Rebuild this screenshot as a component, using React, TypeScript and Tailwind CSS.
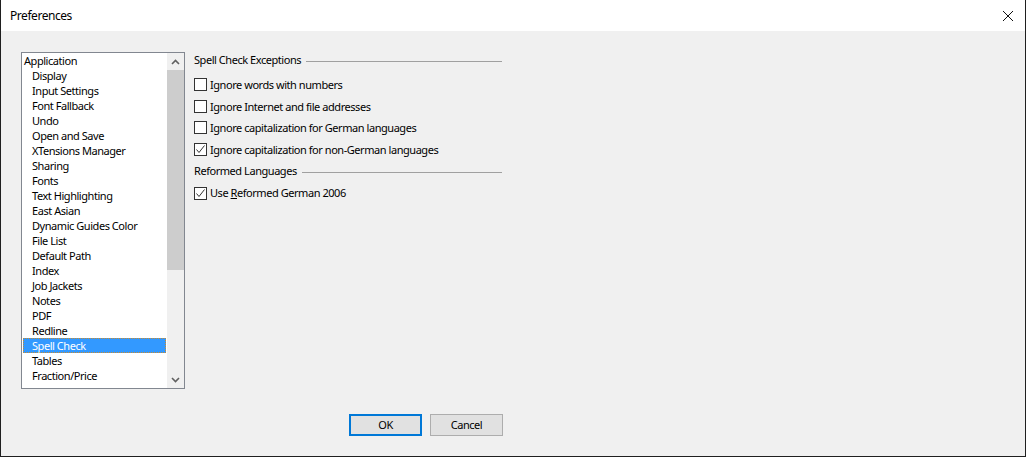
import React from "react";

const items = [
  "Display",
  "Input Settings",
  "Font Fallback",
  "Undo",
  "Open and Save",
  "XTensions Manager",
  "Sharing",
  "Fonts",
  "Text Highlighting",
  "East Asian",
  "Dynamic Guides Color",
  "File List",
  "Default Path",
  "Index",
  "Job Jackets",
  "Notes",
  "PDF",
  "Redline",
  "Spell Check",
  "Tables",
  "Fraction/Price",
];

function Checkbox({ checked }: { checked?: boolean }) {
  return (
    <span className="flex h-[13px] w-[13px] shrink-0 items-center justify-center border border-[#333333] bg-white">
      {checked && (
        <svg width="11" height="11" viewBox="0 0 11 11">
          <path d="M1.5 5.5 L4 8.5 L9.5 1.5" fill="none" stroke="#333333" strokeWidth="1" />
        </svg>
      )}
    </span>
  );
}

function CheckRow({ label, checked }: { label: React.ReactNode; checked?: boolean }) {
  return (
    <div className="flex h-[21.5px] items-center gap-[3px]">
      <Checkbox checked={checked} />
      <span className="pt-px">{label}</span>
    </div>
  );
}

function GroupHeading({ title }: { title: string }) {
  return (
    <div className="flex h-[22px] items-center">
      <span className="pt-px">{title}</span>
      <span className="ml-[5px] mt-[2px] h-px flex-1 bg-[#a0a0a0]" />
    </div>
  );
}

function Chevron({ up }: { up?: boolean }) {
  return (
    <svg width="9" height="6" viewBox="0 0 9 6">
      <path
        d={up ? "M1 5 L4.5 1.5 L8 5" : "M1 1 L4.5 4.5 L8 1"}
        fill="none"
        stroke="#606060"
        strokeWidth="1.6"
      />
    </svg>
  );
}

export default function App() {
  return (
    <div
      className="flex h-[457px] w-[1026px] flex-col border-x border-b border-[#1f1f1f] text-[11px] tracking-[-0.45px] text-black"
      style={{ fontFamily: '"Noto Sans", "Liberation Sans", sans-serif' }}
    >
      <div className="flex h-[31px] shrink-0 items-center justify-between bg-white pl-[9px] pr-[11px]">
        <span className="pt-px text-[12px]">Preferences</span>
        <svg width="12" height="12" viewBox="0 0 12 12">
          <path d="M1 1 L11 11 M11 1 L1 11" stroke="#111111" strokeWidth="1" />
        </svg>
      </div>

      <div className="flex flex-1 flex-col bg-[#f0f0f0] pl-[20px] pt-[18px]">
        <div className="flex items-start">
          <div className="mt-[3px] flex h-[337px] w-[164px] border border-[#828790] bg-white">
            <div className="flex flex-1 flex-col px-px leading-[15px]">
              <div className="h-[15px] pl-px">Application</div>
              {items.map((it) =>
                it === "Spell Check" ? (
                  <div
                    key={it}
                    className="h-[15px] border border-dotted border-[#c98a2e] bg-[#3399ff] pl-[8px] leading-[13px] text-white"
                  >
                    {it}
                  </div>
                ) : (
                  <div key={it} className="h-[15px] pl-[9px]">
                    {it}
                  </div>
                )
              )}
            </div>
            <div className="flex w-[17px] flex-col bg-[#f0f0f0]">
              <div className="flex h-[17px] items-center justify-center">
                <Chevron up />
              </div>
              <div className="h-[200px] bg-[#cdcdcd]" />
              <div className="flex-1" />
              <div className="flex h-[17px] items-center justify-center">
                <Chevron />
              </div>
            </div>
          </div>

          <div className="ml-[9px] flex w-[308px] flex-col">
            <GroupHeading title="Spell Check Exceptions" />
            <div className="mt-[3px]">
              <CheckRow label="Ignore words with numbers" />
              <CheckRow label="Ignore Internet and file addresses" />
              <CheckRow label="Ignore capitalization for German languages" />
              <CheckRow label="Ignore capitalization for non-German languages" checked />
            </div>
            <GroupHeading title="Reformed Languages" />
            <div className="flex h-[22px] items-center gap-[3px]">
              <Checkbox checked />
              <span className="pt-px">
                Use <span className="underline">R</span>eformed German 2006
              </span>
            </div>
          </div>
        </div>

        <div className="ml-[328px] mt-[25px] flex gap-[8px]">
          <button className="h-[22px] w-[73px] border-2 border-[#0078d7] bg-[#e1e1e1]">OK</button>
          <button className="h-[22px] w-[73px] border border-[#adadad] bg-[#e1e1e1]">Cancel</button>
        </div>
      </div>
    </div>
  );
}
